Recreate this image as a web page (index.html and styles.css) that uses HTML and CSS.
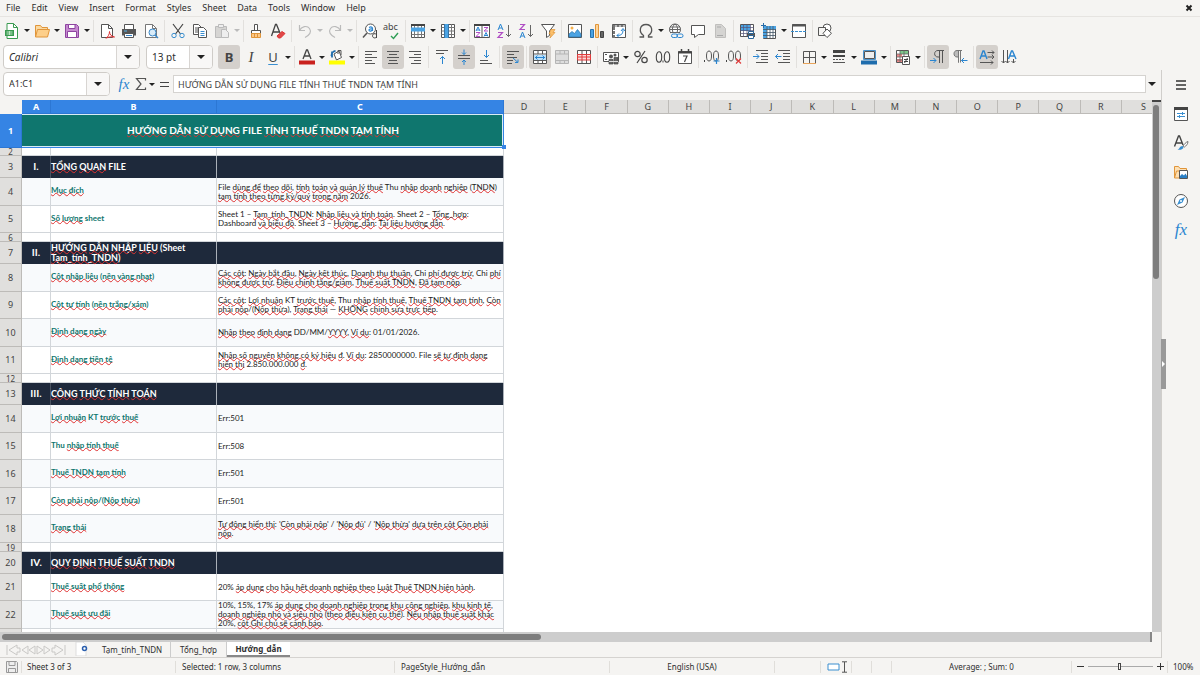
FILE: index.html
```html
<!DOCTYPE html>
<html lang="vi">
<head>
<meta charset="utf-8">
<title>Hướng_dẫn</title>
<link rel="stylesheet" href="styles.css">
</head>
<body>
<nav class="menubar">
<button>File</button><button>Edit</button><button>View</button><button>Insert</button><button>Format</button><button>Styles</button><button>Sheet</button><button>Data</button><button>Tools</button><button>Window</button><button>Help</button>
<button class="close" aria-label="Close"><svg viewBox="0 0 8 8"><path d="M1.500 1.500l5 5m0-5l-5 5" stroke="#222" stroke-width="2"/></svg></button>
</nav>

<div class="toolbar">
<button class="tb" aria-label="New"><svg viewBox="0 0 16 16"><path d="M3 .5h6.500l4 4v11h-10.500z" fill="#fff" stroke="#3a9b50"/><path d="M9.500.5v4h4" stroke="#3a9b50"/><path d="M1 7h9v6h-9z" fill="#3a9b50"/><path d="M2.500 9h6m-6 2h6m-3-3v4" stroke="#bfe5c6"/></svg></button><button class="dd" aria-label="New options"></button>
<button class="tb" aria-label="Open"><svg viewBox="0 0 16 16"><path d="M1.500 14V2.500h5l1.500 2h5.500V7" fill="#fbd9a0" stroke="#e0953a"/><path d="M1.500 14l2-7.500h12l-2 7.500z" fill="#fdcf8a" stroke="#e0953a"/></svg></button><button class="dd" aria-label="Open options"></button>
<button class="tb" aria-label="Save"><svg viewBox="0 0 16 16"><path d="M1.500 1.500h11l2 2v11h-13z" fill="#c68ad0" stroke="#8e44a0"/><path d="M4.500 1.500h6.500v4h-6.500zM3.500 8.500h9v6h-9z" fill="#fff" stroke="#8e44a0"/></svg></button><button class="dd" aria-label="Save options"></button>
<i class="sep"></i>
<button class="tb" aria-label="Export as PDF"><svg viewBox="0 0 16 16"><path d="M2.500 1.500h7l4 4v9h-11z" fill="#fff" stroke="#555"/><path d="M9.500 1.500v4h4" stroke="#555"/><path d="M7 15.500c2-2 3.500-4 3.500-7 0 3 2 5 5 5.500-3-.5-6 0-8 1" stroke="#d33"/></svg></button>
<button class="tb" aria-label="Print"><svg viewBox="0 0 16 16"><path d="M3.500 1.500h9v5h-9z" fill="#fff" stroke="#555"/><path d="M1 6h14v6.500H1z" fill="#555"/><path d="M3.500 10.500h9v4h-9z" fill="#fff" stroke="#555"/><path d="M5 12.500h6" stroke="#3584c8"/><path d="M3 8h3" stroke="#5bb3e8"/></svg></button>
<button class="tb" aria-label="Print preview"><svg viewBox="0 0 16 16"><path d="M2.500 1.500h7l4 4v9h-11z" fill="#fff" stroke="#777"/><path d="M9.500 1.500v4h4" stroke="#777"/><circle cx="9.500" cy="9.500" r="3.500" fill="#d9ecf9" stroke="#3a87c7"/><path d="M12 12l3 3" stroke="#3a87c7" stroke-width="1.500"/></svg></button>
<i class="sep"></i>
<button class="tb" aria-label="Cut"><svg viewBox="0 0 16 16"><path d="M3 1l7.500 10M13 1L5.500 11" stroke="#444" stroke-width="1.200"/><circle cx="4" cy="12.500" r="2.200" stroke="#3a8fd0"/><circle cx="12" cy="12.500" r="2.200" stroke="#3a8fd0"/></svg></button>
<button class="tb" aria-label="Copy"><svg viewBox="0 0 16 16"><path d="M1.500 1.500h5l3 3v7h-8zM3 5h4M3 7h4M3 9h4" fill="#fff" stroke="#555"/><path d="M6.500 4.500h5l3 3v7h-8z" fill="#fff" stroke="#555"/><path d="M8.500 8.500h4m-4 2h4m-4 2h4" stroke="#3a8fd0"/></svg></button>
<button class="tb" aria-label="Paste" disabled><svg viewBox="0 0 16 16"><path d="M1.500 3.500h11v11h-11z" fill="#d6d5d3" stroke="#bbb"/><path d="M4.500 1.500h5v3h-5z" fill="#eee" stroke="#bbb"/><path d="M7.500 6.500h4l3 3v5h-7z" fill="#eee" stroke="#bbb"/></svg></button><button class="dd off" aria-label="Paste options" disabled></button>
<i class="sep tight"></i>
<button class="tb" aria-label="Clone formatting"><svg viewBox="0 0 16 16"><path d="M6.500 1.500h3v6h-3z" fill="#fff" stroke="#555"/><path d="M3.500 7.500h9v3h-9z" fill="#fff" stroke="#555"/><path d="M3.500 10.500h9v4h-9z" fill="#fdc887" stroke="#e0953a"/><path d="M6.500 11v3m3-3v3" stroke="#e0953a"/></svg></button>
<button class="tb" aria-label="Clear formatting"><svg viewBox="0 0 16 16"><path d="M1.500 13l4-11.500h1L10 10M3 9h6" stroke="#444" stroke-width="1.300"/><path d="M7 13l5-4.500 3 2-4.500 4.500h-2z" fill="#e04848" stroke="#d33"/></svg></button>
<i class="sep"></i>
<button class="tb" aria-label="Undo" disabled><svg viewBox="0 0 16 16"><path d="M2.500 2v5.500h5.500M2.500 7.500c2-4 7.500-5.500 10-2s0 6.500-4.500 9" stroke="#bbb" stroke-width="1.200"/></svg></button><button class="dd off" aria-label="Undo list" disabled></button>
<button class="tb" aria-label="Redo" disabled><svg viewBox="0 0 16 16"><path d="M13.500 2v5.500H8M13.500 7.500c-2-4-7.500-5.500-10-2s0 6.500 4.500 9" stroke="#bbb" stroke-width="1.200"/></svg></button><button class="dd off" aria-label="Redo list" disabled></button>
<i class="sep"></i>
<button class="tb" aria-label="Find and replace"><svg viewBox="0 0 16 16"><circle cx="8.500" cy="6" r="5" fill="#fff" stroke="#555"/><path d="M5 10l-4 4.500" stroke="#555" stroke-width="1.500"/><path d="M7 4.500c2-1 3.500-.5 3.500 1V8M10.500 6c-3-.5-4 .5-3.300 1.700.8.800 2.300.5 3.300-.7" stroke="#2a85d0" stroke-width="1.200"/><path d="M14.500 7v8m0-3.500c-1.500-1.500-4-1-4 1.200s2.500 3 4 1.300" stroke="#444"/></svg></button>
<button class="tb" aria-label="Spelling"><span class="abc">abc</span><svg class="tick" viewBox="0 0 10 8"><path d="M2 4l2.500 2.500L9 1" stroke="#2e9e55" stroke-width="1.400"/></svg></button>
<i class="sep tight"></i>
<button class="tb" aria-label="Row"><svg viewBox="0 0 16 16"><path d="M1.500 1.500h13v13h-13z" fill="#fff" stroke="#555"/><path d="M1.500 11.500h13M4.500 1v13.500M8 1v13.500m3.500-13.500v13.500" stroke="#777"/><path d="M1 4.500h14v4H1z" fill="#4ba3e3"/><path d="M1 2h14" stroke="#444" stroke-width="2"/></svg></button><button class="dd" aria-label="Row options"></button>
<button class="tb" aria-label="Column"><svg viewBox="0 0 16 16"><path d="M1.500 1.500h13v13h-13z" fill="#fff" stroke="#555"/><path d="M1.500 4.500h13m-13 3.500h13m-13 3.500h13M11.500 1v13.500" stroke="#777"/><path d="M4.500 1h4v14h-4z" fill="#4ba3e3"/><path d="M4.500 1v14m4-14v14" stroke="#3673a5"/></svg></button><button class="dd" aria-label="Column options"></button>
<i class="sep tight"></i>
<button class="tb" aria-label="Sort"><svg viewBox="0 0 16 16"><path d="M.5 1.500h15v13H.5zM8 2v13" fill="#fff" stroke="#555"/><path d="M0 2h16" stroke="#444" stroke-width="2"/><path d="M2 8l2-4 2 4M2.500 7h3M10 13.500l2-4 2 4m-3.500-1h3" stroke="#2a85d0"/><path d="M2 9.500h4l-4 4h4M10 4.500h4l-4 3.500h4" stroke="#b04ec4"/></svg></button>
<button class="tb" aria-label="Sort ascending"><svg viewBox="0 0 16 16"><path d="M2 7l2.500-6L7 7M3 5h3" stroke="#2a85d0"/><path d="M2 9.500h4.500l-4.500 5h5" stroke="#b04ec4" stroke-width="1.200"/><path d="M12.500 2v11.500M10 11l2.500 2.500L15 11" stroke="#666"/></svg></button>
<button class="tb" aria-label="Sort descending"><svg viewBox="0 0 16 16"><path d="M2 15l2.500-6L7 15m-4-2h3" stroke="#2a85d0"/><path d="M2 1.500h4.500l-4.500 5h5" stroke="#b04ec4" stroke-width="1.200"/><path d="M12.500 2v11.500M10 11l2.500 2.500L15 11" stroke="#666"/></svg></button>
<button class="tb" aria-label="AutoFilter"><svg viewBox="0 0 16 16"><path d="M1.500 1.500h13L9.500 8v4.500l-3 2V8z" fill="#fff" stroke="#555"/><path d="M11 6.500h4l-2 3h2l-5 5.500 1-4H9z" fill="#fcc06b" stroke="#e0953a" stroke-width=".7"/></svg></button>
<i class="sep"></i>
<button class="tb" aria-label="Image"><svg viewBox="0 0 16 16"><path d="M1.500 1.500h13v13h-13z" fill="#fff" stroke="#555"/><circle cx="5" cy="5" r="1.500" fill="#f5b04d"/><path d="M2 14v-3l3-2.500 2.500 2 3-4L14 11v3z" fill="#4ba3e3" stroke="#2872ad" stroke-width=".7"/></svg></button>
<button class="tb" aria-label="Chart"><svg viewBox="0 0 16 16"><path d="M1.500 6.500h3v8h-3z" fill="#4ba3e3" stroke="#2872ad"/><path d="M6.500 1.500h3v13h-3z" fill="#fdd49b" stroke="#e0953a"/><path d="M11.500 8.500h3v6h-3z" fill="#666" stroke="#444"/></svg></button>
<button class="tb" aria-label="Pivot table"><svg viewBox="0 0 16 16"><path d="M1.500 1.500h13v13h-13z" fill="#fff" stroke="#555"/><path d="M1.500 3h13M3 4v11" stroke="#777" stroke-width="2" stroke-dasharray="3 1"/><path d="M6 12.500c5 0 6-2 6-6M10 8l2-2.500L14 8M8 10.500l-2 2 2 2" stroke="#2a85d0"/></svg></button>
<i class="sep"></i>
<button class="tb" aria-label="Special character"><svg viewBox="0 0 16 16"><path d="M1.500 14h4v-1.500C.5 9 1.500 1.500 8 1.500s7.500 7.500 2.500 11V14h4" stroke="#555" stroke-width="1.300"/></svg></button><button class="dd" aria-label="Recent characters"></button>
<button class="tb" aria-label="Hyperlink"><svg viewBox="0 0 16 16"><circle cx="7" cy="6.500" r="5.500" fill="#fff" stroke="#555"/><path d="M1.500 6.500h11M2 4h10M2.500 9.500h9M7 1c-3.500 3-3.500 8 0 11 3.500-3 3.500-8 0-11" stroke="#666"/><path d="M3 10h12v5H3z" fill="#f5f4f2"/><rect x="3.500" y="11" width="6" height="3.500" rx="1.700" stroke="#2a85d0"/><rect x="9" y="11" width="6" height="3.500" rx="1.700" stroke="#2a85d0"/></svg></button>
<button class="tb" aria-label="Comment"><svg viewBox="0 0 16 16"><path d="M1.500 2.500h13v9H8.500l-4 3v-3h-3z" fill="#fff" stroke="#555"/></svg></button>
<button class="tb" aria-label="Headers and footers" disabled><svg viewBox="0 0 16 16"><path d="M3.500 1.500h6l4 4v9h-10z" fill="#d5d4d2" stroke="#c0bfbd"/><path d="M5 4h4M5 12.500h6" stroke="#aaa"/></svg></button>
<i class="sep"></i>
<button class="tb" aria-label="Print area"><svg viewBox="0 0 16 16"><path d="M1.500 1.500h13v12h-13z" fill="#fff" stroke="#555"/><path d="M2 2h9v6H2z" fill="#4ba3e3"/><path d="M1 4.500h14m-14 3h14m-14 3h14M4.500 1v13M8 1v13m3.500-13v13" stroke="#557" stroke-width=".7"/><path d="M8 10h8v4H8z" fill="#555"/><path d="M9.500 8.500h5v2h-5zM9.500 12.500h5v3h-5z" fill="#fff" stroke="#2c669a"/></svg></button>
<button class="tb" aria-label="Freeze rows and columns"><svg viewBox="0 0 16 16"><path d="M2.500 3.500h12v12h-12z" fill="#fff" stroke="#555"/><path d="M2 3h13v3.500H6V15H2z" fill="#4ba3e3"/><path d="M2 6.500h13m-13 3h13m-13 3h13M6 3v12M9 3v12m3-12v12" stroke="#456" stroke-width=".8"/><path d="M0 2.500h5M2.500 0v5" stroke="#2a6da8"/></svg></button><button class="dd" aria-label="Freeze options"></button>
<button class="tb" aria-label="Split window"><svg viewBox="0 0 16 16"><path d="M1.500 1.500h13v13h-13z" fill="#fff" stroke="#555"/><path d="M1 2.500h14" stroke="#555" stroke-width="2"/><path d="M0 8.500h16" stroke="#3a8fd0" stroke-dasharray="3 1"/></svg></button>
<i class="sep tight"></i>
<button class="tb" aria-label="Draw functions"><svg viewBox="0 0 16 16"><circle cx="10" cy="5" r="4" fill="#fff" stroke="#555"/><path d="M1.500 4.500h7v8h-7z" fill="#f5f4f2" stroke="#555"/><path d="M10 6l4.500 4.300L10 14.500l-4-4.200z" fill="#fff" stroke="#555"/></svg></button>
</div>

<div class="toolbar second">
<div class="combo font"><input aria-label="Font name" value="Calibri"><button aria-label="Font list"></button></div>
<div class="combo size"><input aria-label="Font size" value="13 pt"><button aria-label="Size list"></button></div>
<button class="tb on glyph b">B</button>
<button class="tb glyph it">I</button>
<button class="tb glyph ul">U</button><button class="dd" aria-label="Underline options"></button>
<i class="sep tight"></i>
<button class="tb" aria-label="Font color"><svg viewBox="0 0 16 16"><path d="M4 10L7.500 1h1L12 10M5.500 7h5" stroke="#444" stroke-width="1.300"/><path d="M0 11.500h16v4H0z" fill="#c9211e"/></svg></button><button class="dd" aria-label="Font colors"></button>
<button class="tb" aria-label="Highlight color"><svg viewBox="0 0 16 16"><path d="M5 5l5-3 2.500 6.500-5 2.500z" fill="#fff" stroke="#555"/><path d="M9 5V1.500h3V6" stroke="#555"/><path d="M2.500 7c0-3 2-5 4-5M3 2.500v6" stroke="#1f6dad" stroke-width="1.800"/><path d="M0 11.500h16v4H0z" fill="#ff0"/></svg></button><button class="dd" aria-label="Highlight colors"></button>
<i class="sep tight"></i>
<button class="tb" aria-label="Align left"><svg viewBox="0 0 16 16"><path d="M2 2.500h12M2 5.500h7M2 8.500h12M2 11.500h7M2 14.500h10" stroke="#555"/></svg></button>
<button class="tb on" aria-label="Align center"><svg viewBox="0 0 16 16"><path d="M2 2.500h12M4 5.500h8M2 8.500h12M4 11.500h8M3 14.500h10" stroke="#555"/></svg></button>
<button class="tb" aria-label="Align right"><svg viewBox="0 0 16 16"><path d="M2 2.500h12M7 5.500h7M2 8.500h12M7 11.500h7M4 14.500h10" stroke="#555"/></svg></button>
<i class="sep"></i>
<button class="tb" aria-label="Align top"><svg viewBox="0 0 16 16"><path d="M2 1.500h12M2 4.500h8" stroke="#555"/><path d="M8.500 15V7.500M6 10l2.500-2.500L11 10" stroke="#2a85d0"/></svg></button>
<button class="tb on" aria-label="Center vertically"><svg viewBox="0 0 16 16"><path d="M2 6.500h12M2 9.500h12" stroke="#555"/><path d="M8 .5v5M6 3.500l2 2 2-2M8 16v-5M6 13l2-2 2 2" stroke="#2a85d0"/></svg></button>
<button class="tb" aria-label="Align bottom"><svg viewBox="0 0 16 16"><path d="M2 11.500h8M2 14.500h12" stroke="#555"/><path d="M8.500 1v7.500M6 6l2.500 2.500L11 6" stroke="#2a85d0"/></svg></button>
<i class="sep"></i>
<button class="tb on" aria-label="Wrap text"><svg viewBox="0 0 16 16"><path d="M2 2.500h12M2 5.500h7M2 8.500h10M2 11.500h6M2 14.500h5" stroke="#555"/><path d="M8 9l5 4.500m0-3v3h-3" stroke="#2a85d0"/></svg></button>
<i class="sep"></i>
<button class="tb on" aria-label="Merge and center cells"><svg viewBox="0 0 16 16"><path d="M1.500 1.500h13v13h-13zM1.500 5h13m-13 6.500h13M6 1v4m4.500-4v4M6 11v3.500m4.500-3.500v3.500" fill="#fff" stroke="#555"/><path d="M2 6h12v5H2z" fill="#bde0f8"/><path d="M3 8.500h10M5.500 6.500l-2 2 2 2M10.500 6.500l2 2-2 2" stroke="#2a85d0"/></svg></button>
<button class="tb" aria-label="Merge cells" disabled><svg viewBox="0 0 16 16"><path d="M1.500 1.500h13v13h-13zM1.500 5h13m-13 6.500h13M6 1v4m4.500-4v4M6 11v3.500m4.500-3.500v3.500" fill="#ddd" stroke="#b5b5b5"/></svg></button>
<button class="tb" aria-label="Unmerge cells"><svg viewBox="0 0 16 16"><path d="M1.500 1.500h13v13h-13zM6 1v13.500m4.500-13.500v13.500" fill="#fff" stroke="#555"/><path d="M1.500 5.500h13v5.500h-13zM6 5v6m4.500-6v6M1.500 8h13" fill="#fbd8d8" stroke="#e03c3c"/></svg></button>
<i class="sep"></i>
<button class="tb" aria-label="Format as currency"><svg viewBox="0 0 16 16"><path d="M.5 3.500h15v9H.5z" fill="#fff" stroke="#555"/><circle cx="8" cy="7.500" r="2" fill="#555"/><circle cx="12" cy="6" r="1.500" fill="#555"/><path d="M2 5.500h2M2 10.500h2" stroke="#555"/><path d="M6 10.500h4V15H6zM11 8.500h4V15h-4z" fill="#666" stroke="#444" stroke-width=".7"/><path d="M6 12.500h9" stroke="#ddd"/></svg></button><button class="dd" aria-label="Currencies"></button>
<button class="tb" aria-label="Format as percent"><svg viewBox="0 0 16 16"><circle cx="4.500" cy="5" r="2.700" stroke="#444" stroke-width="1.200"/><circle cx="11.500" cy="11" r="2.700" stroke="#444" stroke-width="1.200"/><path d="M12 2L4 14" stroke="#444" stroke-width="1.200"/></svg></button>
<button class="tb" aria-label="Format as number"><svg viewBox="0 0 16 16"><ellipse cx="4" cy="8" rx="2.700" ry="5.200" stroke="#444" stroke-width="1.100"/><ellipse cx="12" cy="8" rx="2.700" ry="5.200" stroke="#444" stroke-width="1.100"/><path d="M8 11.500v2" stroke="#444"/></svg></button>
<button class="tb" aria-label="Format as date"><svg viewBox="0 0 16 16"><path d="M1.500 2.500h13v12h-13z" fill="#fff" stroke="#555"/><path d="M1 3.500h14" stroke="#444" stroke-width="2"/><path d="M4.500 0v3m7-3v3" stroke="#444" stroke-width="1.500"/><path d="M6 7h4l-2.500 6" stroke="#444" stroke-width="1.200"/></svg></button>
<i class="sep"></i>
<button class="tb" aria-label="Add decimal place"><svg viewBox="0 0 16 16"><ellipse cx="5" cy="7" rx="2.500" ry="5" stroke="#555"/><ellipse cx="12" cy="7" rx="2.500" ry="5" stroke="#555"/><path d="M.5 11v2" stroke="#444"/><path d="M12.500 9v6M9.500 12h6" stroke="#2a85d0" stroke-width="1.200"/></svg></button>
<button class="tb" aria-label="Delete decimal place"><svg viewBox="0 0 16 16"><ellipse cx="5" cy="7" rx="2.500" ry="5" stroke="#555"/><ellipse cx="12" cy="7" rx="2.500" ry="5" stroke="#555"/><path d="M.5 11v2" stroke="#444"/><path d="M10 9.500l5 5m0-5l-5 5" stroke="#e03c3c" stroke-width="1.200"/></svg></button>
<i class="sep"></i>
<button class="tb" aria-label="Increase indent"><svg viewBox="0 0 16 16"><path d="M3 1.500h12M8 4.500h7M8 7.500h7M8 10.500h7M3 13.500h12" stroke="#555"/><path d="M0 7.500h6M3.500 5L6 7.500 3.500 10" stroke="#2a85d0"/></svg></button>
<button class="tb" aria-label="Decrease indent"><svg viewBox="0 0 16 16"><path d="M3 1.500h12M8 4.500h7M8 7.500h7M8 10.500h7M3 13.500h12" stroke="#555"/><path d="M.5 7.500h6M3 5L.5 7.500 3 10" stroke="#2a85d0"/></svg></button>
<i class="sep tight"></i>
<button class="tb" aria-label="Borders"><svg viewBox="0 0 16 16"><path d="M2.500 14V2.500h12V14M8.500 2v12M2 8.500h13" stroke="#555"/><path d="M2 14.500h13" stroke="#e8a45a"/></svg></button><button class="dd" aria-label="Border options"></button>
<button class="tb" aria-label="Border style"><svg viewBox="0 0 16 16"><path d="M2 2.500h12" stroke="#444" stroke-width="3"/><path d="M2 7h12" stroke="#444" stroke-width="2"/><path d="M2 10.500h12" stroke="#555" stroke-dasharray="2 1"/><path d="M2 13.500h12" stroke="#555"/></svg></button><button class="dd" aria-label="Border styles"></button>
<button class="tb" aria-label="Border color"><svg viewBox="0 0 16 16"><path d="M3.500 2.500h10v7h-10z" fill="#eee" stroke="#555"/><path d="M2.500 1.500h12v9h-12z" stroke="#4b93cc"/><path d="M0 11.500h16v4H0z" fill="#1f6dad"/></svg></button><button class="dd" aria-label="Border colors"></button>
<i class="sep tight"></i>
<button class="tb" aria-label="Conditional formatting"><svg viewBox="0 0 16 16"><path d="M1.500 1.500h12v12h-12z" fill="#fff" stroke="#555"/><path d="M5 2h8v3H5z" fill="#7bc88b"/><path d="M2 5h5v3H2zM2 10h5v3H2z" fill="#f08a8a"/><path d="M1 5h13M1 8h13M1 11h6M5 1v13M9 1v6" stroke="#666" stroke-width=".8"/><path d="M7.500 7.500h7v8h-7z" fill="#fff" stroke="#555"/><path d="M9 10.500h4m-4 2h4m-.5-3.500l-3 5" stroke="#444"/></svg></button><button class="dd" aria-label="Conditional options"></button>
<i class="sep"></i>
<button class="tb on" aria-label="Left to right"><svg viewBox="0 0 16 16"><path d="M9.500 14V1.500M12.500 14V1.500M14 1.500H8C3.500 1.500 3.500 8 8 8h1.500" stroke="#555"/><path d="M0 11.500h6M3.500 9L6 11.500 3.500 14" stroke="#2a85d0"/></svg></button>
<button class="tb" aria-label="Right to left"><svg viewBox="0 0 16 16"><path d="M8.500 1.500v12M10 1.500H5C1 1.500 1 8 5 8h1.500v5.500V1.500" fill="#bbb" stroke="#777"/><path d="M9.500 11.500h6M12 9l-2.500 2.500L12 14" stroke="#2a85d0"/></svg></button>
<i class="sep"></i>
<button class="tb on" aria-label="Text direction left to right"><svg viewBox="0 0 16 16"><path d="M1 10l3-8h1l3 8M2.500 7h4" stroke="#2a85d0" stroke-width="1.400"/><path d="M8.500 3.500H15M8.500 8H15M1 13.500h13M13 1.500l2 2-2 2M13 6l2 2-2 2M12 11.500l2 2-2 2" stroke="#555"/></svg></button>
<button class="tb" aria-label="Text direction top to bottom"><svg viewBox="0 0 16 16"><path d="M7.500 10l3-8h1l3.500 8M9 7h5" stroke="#2a85d0" stroke-width="1.400"/><path d="M2.500 1v13M6.500 1v13M12.500 10v4M.5 12l2 2 2-2 2 2 2-2M10.500 12l2 2 2-2" stroke="#555"/></svg></button>
</div>

<div class="main">
<div class="work">
<div class="formulabar">
<div class="combo name"><input aria-label="Name box" value="A1:C1"><button aria-label="Named ranges"></button></div>
<button class="tb fx">fx</button>
<button class="sum" aria-label="Select function"><svg viewBox="0 0 12 14"><path d="M10.500 3.500V1.500H1.500L6 7l-4.500 5.500h9v-2" stroke="#555" stroke-width="1.200"/></svg></button>
<button class="dd" aria-label="Functions"></button>
<button class="eq" aria-label="Formula"></button>
<input class="formula" aria-label="Formula input" value="HƯỚNG DẪN SỬ DỤNG FILE TÍNH THUẾ TNDN TẠM TÍNH">
<button class="expand" aria-label="Expand formula bar"></button>
</div>
<div class="grid">
<div class="viewport">
<table class="sheet">
<colgroup><col class="ch"><col class="ca"><col class="cb"><col class="cc"><col><col><col><col><col><col><col><col><col><col><col><col><col><col><col><col class="cs"></colgroup>
<thead><tr><th></th><th class="sel">A</th><th class="sel">B</th><th class="sel">C</th><th>D</th><th>E</th><th>F</th><th>G</th><th>H</th><th>I</th><th>J</th><th>K</th><th>L</th><th>M</th><th>N</th><th>O</th><th>P</th><th>Q</th><th>R</th><th class="last">S</th></tr></thead>
<tbody>
<tr class="title"><th class="sel">1</th><td colspan="3"><u>HƯỚNG</u> <u>DẪN</u> <u>SỬ DỤNG</u> FILE <u>TÍNH</u> <u>THUẾ</u> <u>TNDN</u> <u>TẠM</u> <u>TÍNH</u><span class="handle"></span></td></tr>
<tr class="gap g1"><th>2</th><td></td><td></td><td></td></tr>
<tr class="sec"><th>3</th><td>I.</td><td><u>TỔNG</u> <u>QUAN</u> FILE</td><td></td></tr>
<tr class="alt"><th>4</th><td></td><td><u>Mục đích</u></td><td>File <u>dùng để</u> <u>theo</u> <u>dõi</u>, <u>tính</u> <u>toán</u> <u>và</u> <u>quản lý</u> <u>thuế</u> Thu <u>nhập</u> <u>doanh</u> <u>nghiệp</u> (<u>TNDN</u>)<br><u>tạm tính theo từng kỳ/quý</u> <u>trong năm</u> 2026.</td></tr>
<tr class="row"><th>5</th><td></td><td><u>Số lượng</u> sheet</td><td>Sheet 1 – <u>Tạm_tính_TNDN</u>: <u>Nhập liệu và tính toán</u>. Sheet 2 – <u>Tổng_hợp</u>:<br>Dashboard <u>và biểu đồ</u>. Sheet 3 – <u>Hướng_dẫn</u>: <u>Tài liệu hướng dẫn</u>.</td></tr>
<tr class="gap"><th>6</th><td></td><td></td><td></td></tr>
<tr class="sec"><th>7</th><td>II.</td><td><u>HƯỚNG</u> <u>DẪN</u> <u>NHẬP</u> <u>LIỆU</u> (Sheet<br><u>Tạm_tính_TNDN</u>)</td><td></td></tr>
<tr class="alt"><th>8</th><td></td><td><u>Cột nhập liệu</u> (<u>nền vàng nhạt</u>)</td><td><u>Các cột</u>: <u>Ngày bắt đầu</u>, <u>Ngày kết thúc</u>, <u>Doanh thu thuần</u>, Chi <u>phí được trừ</u>, Chi <u>phí</u><br><u>không được trừ</u>, <u>Điều chỉnh tăng/giảm</u>, <u>Thuế suất TNDN</u>, <u>Đã tạm nộp</u>.</td></tr>
<tr class="row"><th>9</th><td></td><td><u>Cột tự tính</u> (<u>nền trắng/xám</u>)</td><td><u>Các cột</u>: <u>Lợi nhuận</u> KT <u>trước thuế</u>, Thu <u>nhập tính thuế</u>, <u>Thuế TNDN tạm tính</u>, <u>Còn</u><br><u>phải nộp</u>/(<u>Nộp thừa</u>), <u>Trạng thái</u> — <u>KHÔNG</u> <u>chỉnh sửa trực tiếp</u>.</td></tr>
<tr class="alt"><th>10</th><td></td><td><u>Định dạng ngày</u></td><td><u>Nhập</u> <u>theo</u> <u>định dạng</u> DD/MM/<u>YYYY</u>, <u>Ví dụ</u>: 01/01/2026.</td></tr>
<tr class="row"><th>11</th><td></td><td><u>Định dạng tiền tệ</u></td><td><u>Nhập số nguyên không có ký hiệu</u> <u>đ</u>. <u>Ví dụ</u>: 2850000000. File <u>sẽ tự định dạng</u><br><u>hiển thị</u> 2.850.000.000 <u>đ</u>.</td></tr>
<tr class="gap"><th>12</th><td></td><td></td><td></td></tr>
<tr class="sec"><th>13</th><td>III.</td><td><u>CÔNG</u> <u>THỨC</u> <u>TÍNH</u> <u>TOÁN</u></td><td></td></tr>
<tr class="alt"><th>14</th><td></td><td><u>Lợi nhuận</u> KT <u>trước</u> <u>thuế</u></td><td>Err:501</td></tr>
<tr class="row"><th>15</th><td></td><td>Thu <u>nhập tính thuế</u></td><td>Err:508</td></tr>
<tr class="alt"><th>16</th><td></td><td><u>Thuế TNDN tạm tính</u></td><td>Err:501</td></tr>
<tr class="row"><th>17</th><td></td><td><u>Còn phải nộp</u>/(<u>Nộp thừa</u>)</td><td>Err:501</td></tr>
<tr class="alt"><th>18</th><td></td><td><u>Trạng thái</u></td><td><u>Tự động hiển thị</u>: '<u>Còn phải nộp</u>' / '<u>Nộp đủ</u>' / '<u>Nộp thừa</u>' <u>dựa trên cột Còn phải</u><br><u>nộp</u>.</td></tr>
<tr class="gap"><th>19</th><td></td><td></td><td></td></tr>
<tr class="sec"><th>20</th><td>IV.</td><td><u>QUY</u> <u>ĐỊNH</u> <u>THUẾ</u> <u>SUẤT</u> <u>TNDN</u></td><td></td></tr>
<tr class="row"><th>21</th><td></td><td><u>Thuế suất phổ thông</u></td><td>20% <u>áp dụng</u> <u>cho</u> <u>hầu hết doanh nghiệp theo</u> <u>Luật Thuế TNDN hiện hành</u>.</td></tr>
<tr class="alt"><th>22</th><td></td><td><u>Thuế suất ưu đãi</u></td><td>10%, 15%, 17% <u>áp dụng cho doanh nghiệp trong khu công nghiệp</u>, <u>khu kinh tế</u>,<br><u>doanh nghiệp nhỏ và siêu nhỏ</u> (<u>theo điều kiện cụ thể</u>). <u>Nếu nhập thuế suất khác</u><br>20%, <u>cột Ghi chú sẽ cảnh báo</u>.</td></tr>
<tr class="row"><th></th><td></td><td></td><td></td></tr>
</tbody>
</table>
</div>
<div class="vscroll"><div class="thumb"></div></div>
</div>
<div class="hscroll"><div class="thumb"></div></div>
<div class="tabs">
<svg class="navs" viewBox="0 0 60 12"><path d="M1 1v10M11 1L3 6l8 5V8h3V4h-3zM22 2l-6 4 6 4zM29 2l-6 4 6 4zM31 2l6 4-6 4zM38 2l6 4-6 4zM49 1l8 5-8 5V8h-3V4h3zM59 1v10" stroke="#c9c8c6"/></svg>
<button class="add" aria-label="Add sheet"><svg viewBox="0 0 14 14"><path d="M1 0h7l3 3v11H1z" fill="#fff" stroke="#ddd"/><circle cx="9.500" cy="6.500" r="2" stroke="#2b5fae" stroke-width="1.500"/></svg></button>
<button class="tab t1">Tạm_tính_TNDN</button><button class="tab t2">Tổng_hợp</button><button class="tab active">Hướng_dẫn</button>
</div>
</div>
<aside class="sidebar">
<button aria-label="Sidebar settings"><svg viewBox="0 0 16 16"><path d="M3 4h10M3 8h10M3 12h10" stroke="#333" stroke-width="1.500"/></svg></button>
<button aria-label="Properties"><svg viewBox="0 0 16 16"><path d="M1.500 2.500h13v12h-13z" fill="#fff" stroke="#555"/><path d="M1 2.500h14" stroke="#444" stroke-width="3"/><path d="M4 7.500h8M4 10.500h8" stroke="#3a8fd0"/><path d="M9.500 6v3M6.500 9v3" stroke="#3a8fd0"/></svg></button>
<button aria-label="Styles"><svg viewBox="0 0 16 16"><path d="M1.500 11.500L5.500 1h1l3.500 9M3 8h6" stroke="#444" stroke-width="1.400"/><path d="M15 6.500c-2 .5-4 3-5 4.500l1.500 1C13 11 15 9 15 6.500z" fill="#fff" stroke="#555" stroke-width=".8"/><path d="M4.500 14.500c2 0 2-3.500 5-3.500 2.500 1 0 5-5 3.500z" fill="#3a8fd0"/></svg></button>
<button aria-label="Gallery"><svg viewBox="0 0 16 16"><path d="M1.500 14V2.500h4l1.500 2h6.500V7M1.500 14l2-7h4v7z" fill="#fde0b5" stroke="#e0953a"/><path d="M6.500 6.500h8v8h-8z" fill="#fff" stroke="#555"/><path d="M7 14v-2l2-2 2 1.500 1.500-2L14 12v2z" fill="#2a7fc5"/></svg></button>
<button aria-label="Navigator"><svg viewBox="0 0 16 16"><circle cx="8" cy="8" r="6.500" fill="#fff" stroke="#555"/><path d="M12 4L9.500 9.500 4 12l2.500-5.500z" fill="#3a8fd0"/><circle cx="8" cy="8" r="1" fill="#fff"/></svg></button>
<button class="fx big">fx</button>
<div class="grip"><svg viewBox="0 0 5 8"><path d="M1 1l3 3-3 3z" fill="#fff"/></svg></div>
</aside>
</div>

<footer class="status">
<svg class="disk" viewBox="0 0 12 12"><path d="M.5.5h10l1 1v10H.5zM3 .5h6v4H3zM2.500 7.500h7v4h-7z" fill="#eee" stroke="#999"/></svg>
<span class="s1">Sheet 3 of 3</span><span class="s2">Selected: 1 row, 3 columns</span><span class="s3">PageStyle_Hướng_dẫn</span><span class="s4">English (USA)</span><span class="mode"></span>
<span class="s5"><svg viewBox="0 0 20 12"><path d="M1 3h11v6H1z" fill="#fff" stroke="#3a8fd0"/><path d="M15 .8h5M15 11.200h5M17.500 1v10" stroke="#555"/></svg></span><span class="s6"></span><span class="s7"></span><span class="s8">Average: ; Sum: 0</span>
<span class="s9"><button class="minus" aria-label="Zoom out"></button><input type="range" aria-label="Zoom" min="0" max="100" value="49"><button class="plus" aria-label="Zoom in"></button></span><span class="s10">100%</span>
</footer>
</body>
</html>
```
FILE: styles.css
```css
* { box-sizing: border-box; }
body {
  margin: 0;
  height: 100vh;
  display: flex;
  flex-direction: column;
  overflow: hidden;
  background: #f5f4f2;
  color: #2e2e2e;
  font: 9px/12px "Noto Sans", sans-serif;
}
button, input { font: inherit; color: inherit; margin: 0; padding: 0; border: 0; background: none; border-radius: 0; }
button { flex: none; }
input { min-width: 0; outline: 0; }
svg { display: block; fill: none; }

.menubar { display: flex; align-items: center; gap: 11px; height: 17px; flex: none; padding-left: 6px; border-bottom: 1px solid #e6e4e1; }
.menubar .close { margin-left: auto; margin-right: 7px; width: 8px; }

.toolbar { display: flex; align-items: center; height: 27px; flex: none; padding-left: 1px; }
.toolbar.second { padding-left: 3px; height: 26px; }
.tb { position: relative; width: 22px; height: 24px; display: flex; align-items: center; justify-content: center; border-radius: 3px; }
.tb > svg { width: 16px; height: 16px; }
.tb.on { background: #d4d0cc; }
.dd { width: 8px; height: 24px; display: flex; align-items: center; justify-content: center; }
.dd::before, .combo button::before, .expand::before { content: ""; border: solid transparent; border-width: 3px 3px 0; border-top-color: #222; }
.dd.off::before { border-top-color: #bbb; }
.sep { flex: none; width: 5px; height: 22px; background: linear-gradient(#e2e0dd, #e2e0dd) center / 1px 100% no-repeat; }
.sep.tight { width: 4px; }
.tb .abc { position: absolute; left: 2px; top: 2px; font-size: 9px; line-height: 12px; color: #444; }
.tb .tick { position: absolute; left: 8px; top: 13px; width: 10px; height: 8px; }

.combo { display: flex; height: 24px; flex: none; border: 1px solid #cfccc8; border-radius: 4px; background: #fff; overflow: hidden; }
.combo input { flex: 1; padding-left: 5px; font-size: 10px; }
.combo.name input { font-size: 9px; }
.combo button { width: 23px; border-left: 1px solid #d8d5d2; background: #f8f7f6; display: flex; align-items: center; justify-content: center; }
.combo button::before, .expand::before { border-width: 4px 4px 0; }
.combo.font { width: 137px; margin-right: 6px; }
.combo.font input { font-style: italic; }
.combo.size { width: 67px; margin-right: 5px; }
.combo.name { width: 107px; }
.glyph { font-size: 14px; line-height: 18px; color: #444; }
.glyph.b { font-weight: 700; font-size: 13px; }
.glyph.it { font-family: "Liberation Serif", serif; font-style: italic; font-size: 15px; }
.glyph.ul { text-decoration: underline #3a8fd0 1px; text-underline-offset: 2px; font-size: 13px; }

.main { flex: 1; min-height: 0; display: flex; }
.work { flex: 1; min-width: 0; display: flex; flex-direction: column; border-right: 1px solid #d0cecb; }
.formulabar { display: flex; align-items: center; height: 30px; flex: none; padding: 0 3px 2px; }
.fx { font-family: "Liberation Serif", serif; font-style: italic; font-size: 15px; color: #2a85d0; margin-left: 3px; }
.sum { width: 12px; height: 14px; }
.formulabar .dd { width: 10px; }
.eq { width: 9px; height: 5px; margin: 0 4px 0 3px; border: solid #444; border-width: 1px 0; }
.formula { flex: 1; height: 18px; border: 1px solid #d5d3d0; background: #fff; padding-left: 4px; color: #444; }
.expand { width: 12px; display: flex; justify-content: center; }

.grid { flex: 1; min-height: 0; display: flex; }
.viewport { flex: 1; min-width: 0; overflow: hidden; background: #fff; }
.sheet { width: 100%; table-layout: fixed; border-collapse: separate; border-spacing: 0; }
.ch { width: 22px; } .ca { width: 29px; } .cb { width: 166px; } .cc { width: 287px; } .cs { width: 30px; }
.sheet th { padding: 0; font-weight: 400; color: #444; background: #e0dfdd; border-right: 1px solid #bdbbb8; border-bottom: 1px solid #bdbbb8; line-height: 8px; }
.sheet thead th { height: 14px; line-height: 12px; }
.sheet thead th:first-child { background: #f5f4f2; border-color: #f5f4f2; }
.sheet thead th.last { text-align: right; padding-right: 6px; border-right: 0; }
.sheet th.sel, .sheet thead th.sel { background: #3584e4; color: #fff; font-weight: 700; border-color: #2c77d4; }
.sheet td { padding: 0 1px; border-right: 1px solid #d2d6da; border-bottom: 1px solid #d2d6da; font: 8px/9px Lato, sans-serif; color: #222; white-space: nowrap; }
.row > * { height: 27px; }
.alt > * { height: 28px; }
.alt td { background: #f8fafc; }
.gap > * { height: 9px; }
.gap.g1 > * { height: 8px; }
.sheet .gap th { font-size: 8px; line-height: 7px; }
.sheet .gap td { font-size: 0; line-height: 0; }
.sheet .row td:nth-child(3), .sheet .alt td:nth-child(3) { color: #0f766e; font-weight: 700; padding: 0 0 2px; }
.sheet .sec > * { height: 22px; }
.sheet .sec td { background: #1e293b; color: #fff; font-size: 9px; font-weight: 700; line-height: 10px; border-bottom: 0; border-color: #aab0b8; padding: 0 0 1px; }
.sheet .sec td:nth-child(2) { text-align: center; font-size: 10px; border-color: #4a5361; padding-bottom: 2px; }
.sheet .title > * { height: 34px; }
.sheet .title td { position: relative; background: #0f766e; color: #fff; text-align: center; font-size: 10px; line-height: 16px; font-weight: 700; padding: 0 0 2px; border: 0; box-shadow: inset -1px -1px #3584e4, inset -2px -2px #d8ecf5, inset 0 1px #d8ecf5; }
.handle { position: absolute; right: -2px; bottom: -1px; width: 4px; height: 4px; background: #3584e4; }
u { text-decoration: underline wavy #e03131 1px; text-underline-offset: -1px; text-decoration-skip-ink: none; }

.vscroll { width: 9px; flex: none; background: #cdcdcd; border-top: 2px solid #444; padding: 3px 2px 0 1px; }
.vscroll .thumb { height: 33%; border-radius: 3px; background: #7d7d7d; }
.hscroll { height: 10px; flex: none; margin-right: 9px; background: #cdcdcd; border-right: 2px solid #888; padding: 2px; }
.hscroll .thumb { width: 47%; height: 6px; border-radius: 3px; background: #7d7d7d; }
.tabs { display: flex; height: 16px; flex: none; padding-left: 6px; border-bottom: 1px solid #d5d3d0; font-size: 8px; }
.navs { width: 60px; height: 12px; margin-top: 2px; flex: none; }
.add { width: 14px; height: 14px; margin: 0 13px 0 9px; }
.add svg { width: 14px; height: 14px; }
.tab { height: 15px; padding: 0; text-align: center; border-right: 1px solid #ccc; }
.t1 { width: 69px; text-align: left; }
.t2 { width: 56px; }
.tab.active { width: 63px; background: #fff; font-weight: 700; border-right: 0; border-bottom: 2px solid #888; }

.sidebar { position: relative; width: 38px; flex: none; display: flex; flex-direction: column; align-items: center; gap: 13px; padding-top: 7px; }
.sidebar button { width: 16px; height: 16px; }
.sidebar .fx.big { margin: 0; font-size: 17px; line-height: 16px; }
.grip { position: absolute; left: -1px; top: 269px; width: 5px; height: 50px; background: #999; display: flex; align-items: center; }
.grip svg { width: 5px; height: 8px; }

.status { display: flex; align-items: center; height: 17px; flex: none; font-size: 8px; }
.status span { flex: none; height: 12px; border-left: 1px solid #e0deda; }
.disk { width: 12px; height: 12px; margin: 0 3px 0 6px; flex: none; }
.status .s1 { width: 154px; padding-left: 5px; }
.status .s2 { width: 219px; padding-left: 6px; }
.status .s3 { flex: 1 0 215px; padding-left: 6px; }
.status .s4 { width: 165px; text-align: center; }
.status .mode { width: 46px; }
.status .s5 { width: 31px; padding-left: 6px; }
.s5 svg { width: 20px; height: 12px; }
.status .s6, .status .s7 { width: 20px; }
.status .s8 { width: 180px; text-align: center; }
.status .s9 { width: 96px; display: flex; align-items: center; padding-left: 5px; gap: 4px; }
.status .s10 { width: 33px; padding-left: 5px; }
.minus, .plus { width: 7px; height: 7px; background: linear-gradient(#333, #333) center / 7px 1px no-repeat; }
.plus { background: linear-gradient(#333, #333) center / 7px 1px no-repeat, linear-gradient(#333, #333) center / 1px 7px no-repeat; }
input[type=range] { appearance: none; width: 65px; height: 8px; background: linear-gradient(#aaa, #aaa) center / 100% 1px no-repeat; }
input[type=range]::-webkit-slider-thumb { appearance: none; width: 3px; height: 7px; border: 1px solid #444; background: #f5f4f2; }
```
